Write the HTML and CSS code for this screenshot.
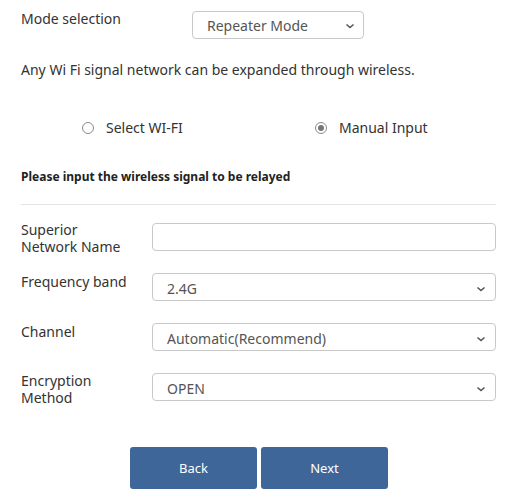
FILE: index.html
```
<!DOCTYPE html>
<html>
<head>
<meta charset="utf-8">
<link rel="stylesheet" href="styles.css">
</head>
<body>
<div class="page">
  <div class="mode-row">
    <span class="mode-label">Mode selection</span>
    <div class="sel mode-sel"><span class="sel-text">Repeater Mode</span><svg class="chev" width="10" height="6" viewBox="0 0 10 6"><path d="M1.5 1.5 L5 4.5 L8.5 1.5" fill="none" stroke="#555" stroke-width="1.6"/></svg></div>
  </div>
  <p class="desc">Any Wi Fi signal network can be expanded through wireless.</p>
  <div class="radios">
    <label class="radio"><span class="dot"></span>Select WI-FI</label>
    <label class="radio"><span class="dot on"></span>Manual Input</label>
  </div>
  <div class="hint">Please input the wireless signal to be relayed</div>
  <div class="rule"></div>
  <div class="form">
    <div class="row r1">
      <span class="lbl"><span class="ln">Superior</span><span class="ln">Network Name</span></span>
      <div class="field"></div>
    </div>
    <div class="row">
      <span class="lbl">Frequency band</span>
      <div class="sel wide"><span class="sel-text">2.4G</span><svg class="chev" width="10" height="6" viewBox="0 0 10 6"><path d="M1.5 1.5 L5 4.5 L8.5 1.5" fill="none" stroke="#555" stroke-width="1.6"/></svg></div>
    </div>
    <div class="row">
      <span class="lbl">Channel</span>
      <div class="sel wide"><span class="sel-text">Automatic(Recommend)</span><svg class="chev" width="10" height="6" viewBox="0 0 10 6"><path d="M1.5 1.5 L5 4.5 L8.5 1.5" fill="none" stroke="#555" stroke-width="1.6"/></svg></div>
    </div>
    <div class="row">
      <span class="lbl"><span class="ln">Encryption</span><span class="ln">Method</span></span>
      <div class="sel wide"><span class="sel-text">OPEN</span><svg class="chev" width="10" height="6" viewBox="0 0 10 6"><path d="M1.5 1.5 L5 4.5 L8.5 1.5" fill="none" stroke="#555" stroke-width="1.6"/></svg></div>
    </div>
  </div>
  <div class="buttons">
    <button class="btn">Back</button>
    <button class="btn">Next</button>
  </div>
</div>
</body>
</html>
```
FILE: styles.css
```
* { box-sizing: border-box; }
html, body { margin: 0; padding: 0; background: #fff; }
body {
  font-family: "Noto Sans", "Open Sans", sans-serif;
  font-size: 14px;
  color: #333;
}
.page { padding: 0 16px 0 21px; width: 512px; }
.mode-row { display: flex; padding-top: 10px; height: 38px; }
.mode-label { width: 171px; line-height: 17px; }
.sel {
  display: flex; align-items: center; justify-content: space-between;
  border: 1px solid #c8c8c8; border-radius: 4px; background: #fff;
  height: 28px; color: #555;
}
.mode-sel { width: 172px; padding: 2px 8px 0 14px; height: 28px; margin-top: 1px; }
.sel-text { line-height: 20px; }
.chev { flex: none; }
.desc { margin: 22px 0 0; line-height: 20px; height: 20px; }
.radios { display: flex; padding-left: 61px; margin-top: 38px; height: 20px; }
.radio { display: flex; align-items: center; line-height: 20px; }
.radio:first-child { width: 233px; }
.dot {
  width: 12px; height: 12px; border-radius: 50%;
  border: 1px solid #8a8a8a; margin-right: 12px; position: relative;
}
.dot.on::after {
  content: ""; position: absolute; left: 2px; top: 2px;
  width: 6px; height: 6px; border-radius: 50%; background: #777;
}
.hint { margin-top: 31px; font-weight: bold; font-size: 12px; line-height: 16px; color: #222; }
.rule { height: 1px; background: #e3e3e3; margin-top: 19px; width: 475px; }
.form { margin-top: 18px; display: flex; flex-direction: column; gap: 22px; }
.row { display: grid; grid-template-columns: 131px 344px; height: 28px; align-items: start; }
.lbl { line-height: 17px; white-space: nowrap; display: flex; flex-direction: column; }
.ln { display: block; height: 16.5px; line-height: 16.5px; }
.field { height: 28px; border: 1px solid #c8c8c8; border-radius: 4px; }
.wide { height: 28px; padding: 3px 9px 0 14px; }
.r1 .lbl { margin-top: -1px; }
.buttons { display: flex; gap: 4px; padding-left: 109px; margin-top: 46px; }
.btn {
  width: 127px; height: 42px; border: none; border-radius: 3px;
  background: #3f6699; color: #fff;
  font-family: "Noto Sans", "Open Sans", sans-serif; font-size: 13px;
}
```
